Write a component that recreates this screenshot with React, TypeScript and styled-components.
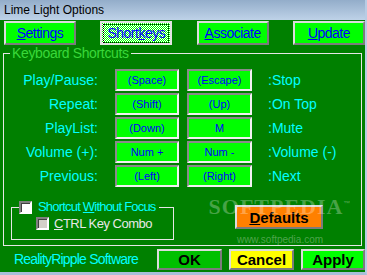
import { Fragment } from "react"
import styled, { createGlobalStyle } from "styled-components"

const Global = createGlobalStyle`
  html, body { margin: 0; padding: 0; background: #ffffff; }
  body { font-family: "Liberation Sans", Arial, sans-serif; }
  #root { width: 367px; height: 275px; }
`

const Window = styled.div`
  position: relative;
  width: 367px;
  height: 275px;
  box-sizing: border-box;
  background: #008000;
  border-right: 2px solid #b8cce4;
  border-bottom: 3px solid #a9bfd8;
  display: flex;
  flex-direction: column;
  overflow: hidden;
`

const TitleBar = styled.div`
  height: 20px;
  flex: none;
  margin-right: -2px;
  padding-left: 4px;
  background: linear-gradient(#93adca, #bed2e8);
  color: #000;
  font-size: 12px;
  line-height: 21px;
`

const TabRow = styled.div`
  display: flex;
  justify-content: space-between;
  padding: 1px 0 0 4px;
`

const Bevel = styled.div<{ bg: string }>`
  box-sizing: border-box;
  flex: none;
  display: flex;
  align-items: center;
  justify-content: center;
  background: ${({ bg }) => bg};
  border: 2px solid;
  border-color: #dcdcdc #7c7c7c #7c7c7c #dcdcdc;
`

const Tab = styled(Bevel)<{ active?: boolean }>`
  width: 72px;
  height: 24px;
  color: #0000ff;
  font-size: 14px;
  letter-spacing: -0.5px;
  ${({ active }) =>
    active &&
    `
    border-color: #e4e4e4;
    background-image: conic-gradient(#ffffff 25%, #00ff00 0 50%, #ffffff 0 75%, #00ff00 0);
    background-size: 2px 2px;
  `}
`

const Focus = styled.span`
  padding: 0 2px;
  outline: 1px dotted #000;
  outline-offset: 1px;
  line-height: 15px;
`

const Group = styled.fieldset`
  margin: 1px 3px 0 3px;
  padding: 9px 0 5px 0;
  border: 1px solid #e6e6e6;
  min-width: 0;
`

const GroupTitle = styled.legend`
  margin-left: 6px;
  padding: 0 2px;
  color: #3ad83a;
  font-size: 14px;
  line-height: 14px;
  letter-spacing: -0.35px;
`

const Rows = styled.div`
  display: grid;
  grid-template-columns: 94px 81px 73px 1fr;
  grid-auto-rows: 22px;
  row-gap: 2px;
  align-items: center;
`

const Label = styled.div`
  text-align: right;
  color: #00ffff;
  font-size: 14px;
`

const Key = styled.div<{ w: number }>`
  box-sizing: border-box;
  justify-self: end;
  width: ${({ w }) => w}px;
  height: 22px;
  display: flex;
  align-items: center;
  justify-content: center;
  background: #00ff00;
  border: 2px solid;
  border-color: #8a8a8a #f2f2f2 #f2f2f2 #8a8a8a;
  color: #0000ff;
  font-size: 11px;
`

const Action = styled.div`
  padding-left: 16px;
  color: #00ffff;
  font-size: 14px;
`

const Lower = styled.div`
  display: flex;
  align-items: flex-start;
  margin-top: 13px;
`

const SubGroup = styled.fieldset`
  margin: 0 0 0 7px;
  padding: 2px 0 8px 0;
  width: 163px;
  min-width: 0;
  box-sizing: border-box;
  border: 1px solid #e6e6e6;
`

const SubTitle = styled.legend`
  display: flex;
  align-items: center;
  gap: 6px;
  margin-left: 7px;
  padding: 0 3px 0 0;
  white-space: nowrap;
  color: #00ffff;
  font-size: 13px;
  line-height: 14px;
  letter-spacing: -0.8px;
`

const Check = styled.span<{ off?: boolean }>`
  box-sizing: border-box;
  width: 13px;
  height: 13px;
  flex: none;
  background: ${({ off }) => (off ? "#d4d0c8" : "#ffffff")};
  border: 2px solid;
  border-color: #808080 #ffffff #ffffff #808080;
  box-shadow: inset 1px 1px #404040;
`

const CheckLine = styled.div`
  display: flex;
  align-items: center;
  gap: 5px;
  padding-left: 24px;
  white-space: nowrap;
  color: #e8e8e8;
  font-size: 13px;
  letter-spacing: -0.5px;
`

const Button = styled(Bevel)<{ w: number; h: number }>`
  width: ${({ w }) => w}px;
  height: ${({ h }) => h}px;
  color: #000;
  font-size: 15px;
  font-weight: bold;
`

const Defaults = styled(Button)`
  margin: 5px 0 0 61px;
`

const Footer = styled.div`
  flex: 1;
  display: flex;
  align-items: center;
  gap: 7px;
  padding: 0 0 0 14px;
`

const Status = styled.div`
  margin-right: auto;
  white-space: nowrap;
  color: #00ffff;
  font-size: 14px;
  letter-spacing: -0.8px;
`

const Watermark = styled.div`
  position: absolute;
  left: 215px;
  top: 195px;
  width: 130px;
  display: flex;
  flex-direction: column;
  align-items: center;
  pointer-events: none;
  color: rgba(255, 255, 255, 0.28);
`

const Mark = styled.div`
  font-family: "Liberation Serif", serif;
  font-size: 22px;
  font-weight: bold;
  letter-spacing: 1px;
  line-height: 17px;
  sup { font-size: 7px; font-family: "Liberation Sans", sans-serif; }
`

const Site = styled.div`
  margin-top: 19px;
  font-size: 10px;
  line-height: 11px;
  color: rgba(255, 255, 255, 0.3);
`

const shortcuts = [
  ["Play/Pause:", "(Space)", "(Escape)", ":Stop"],
  ["Repeat:", "(Shift)", "(Up)", ":On Top"],
  ["PlayList:", "(Down)", "M", ":Mute"],
  ["Volume (+):", "Num +", "Num -", ":Volume (-)"],
  ["Previous:", "(Left)", "(Right)", ":Next"],
]

export default function App() {
  return (
    <Window>
      <Global />
      <TitleBar>Lime Light Options</TitleBar>
      <TabRow>
        <Tab bg="#00ff00"><span><u>S</u>ettings</span></Tab>
        <Tab bg="#00ff00" active><Focus>Short<u>k</u>eys</Focus></Tab>
        <Tab bg="#00ff00"><span><u>A</u>ssociate</span></Tab>
        <Tab bg="#00ff00"><span><u>U</u>pdate</span></Tab>
      </TabRow>
      <Group>
        <GroupTitle>Keyboard Shortcuts</GroupTitle>
        <Rows>
          {shortcuts.map(([label, a, b, action]) => (
            <Fragment key={label}>
              <Label>{label}</Label>
              <Key w={64}>{a}</Key>
              <Key w={65}>{b}</Key>
              <Action>{action}</Action>
            </Fragment>
          ))}
        </Rows>
        <Lower>
          <SubGroup>
            <SubTitle>
              <Check />
              <span>Shortcut <u>W</u>ithout Focus</span>
            </SubTitle>
            <CheckLine>
              <Check off />
              <span><u>C</u>TRL Key Combo</span>
            </CheckLine>
          </SubGroup>
          <Defaults bg="#ff8000" w={88} h={24}><span><u>D</u>efaults</span></Defaults>
        </Lower>
      </Group>
      <Footer>
        <Status>RealityRipple Software</Status>
        <Button bg="#00c000" w={65} h={21}>OK</Button>
        <Button bg="#ffff00" w={65} h={21}>Cancel</Button>
        <Button bg="#00ff00" w={64} h={21}>Apply</Button>
      </Footer>
      <Watermark>
        <Mark>SOFTPEDIA<sup>™</sup></Mark>
        <Site>www.softpedia.com</Site>
      </Watermark>
    </Window>
  )
}
